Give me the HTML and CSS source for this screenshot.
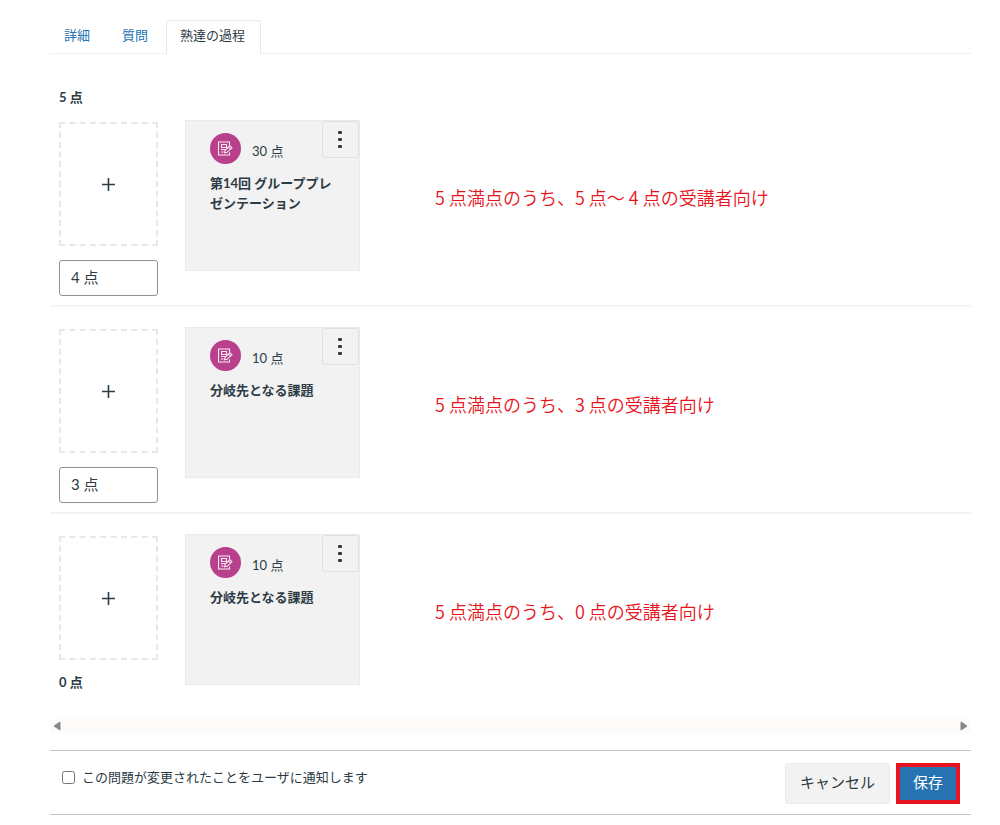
FILE: index.html
```html
<!DOCTYPE html>
<html lang="ja">
<head>
  <meta charset="UTF-8" />
  <title>熟達の過程</title>
  <meta name="viewport" content="width=device-width, initial-scale=1" />
  <link rel="stylesheet" href="styles.css">
</head>
<body>
  <svg class="sprite" aria-hidden="true">
    <symbol id="icon-assignment" viewBox="0 0 15 15">
      <path d="M11.500 4.500V1H.5v13h11v-2.500M3.500 3.500h5v3h-5zM3 8.500h4M3 11h2.500" />
      <path d="M6.500 11.800l.6-2.500L11.800 4.800l2.200 2-4.900 4.500zM10.500 6.200l2 2" />
    </symbol>
    <symbol id="icon-more" viewBox="0 0 18 18">
      <rect x="7" y="1" width="4" height="3" rx="1" />
      <rect x="7" y="8" width="4" height="3" rx="1" />
      <rect x="7" y="15" width="4" height="3" rx="1" />
    </symbol>
    <symbol id="icon-plus" viewBox="0 0 13 13">
      <path d="M6.500 0v13M0 6.500h13" />
    </symbol>
  </svg>

  <main class="page">
    <nav class="tabs">
      <a class="tab" href="#details">詳細</a>
      <a class="tab" href="#questions">質問</a>
      <a class="tab active" href="#mastery" aria-current="page">熟達の過程</a>
    </nav>

    <div class="paths">
      <p class="score">5 点</p>

      <section class="range">
        <div class="bounds">
          <button class="add-item" type="button" aria-label="アイテムを追加"><svg><use href="#icon-plus" /></svg></button>
          <input class="bound" type="text" value="4 点" aria-label="下限の点数">
        </div>
        <article class="card">
          <button class="card-menu" type="button" aria-label="オプション"><svg><use href="#icon-more" /></svg></button>
          <div class="card-head">
            <span class="badge"><svg><use href="#icon-assignment" /></svg></span>
            <span class="points">30 点</span>
          </div>
          <h2 class="card-title">第14回 グループプレゼンテーション</h2>
        </article>
        <p class="note">5 点満点のうち、5 点～ 4 点の受講者向け</p>
      </section>

      <section class="range">
        <div class="bounds">
          <button class="add-item" type="button" aria-label="アイテムを追加"><svg><use href="#icon-plus" /></svg></button>
          <input class="bound" type="text" value="3 点" aria-label="下限の点数">
        </div>
        <article class="card">
          <button class="card-menu" type="button" aria-label="オプション"><svg><use href="#icon-more" /></svg></button>
          <div class="card-head">
            <span class="badge"><svg><use href="#icon-assignment" /></svg></span>
            <span class="points">10 点</span>
          </div>
          <h2 class="card-title">分岐先となる課題</h2>
        </article>
        <p class="note">5 点満点のうち、3 点の受講者向け</p>
      </section>

      <section class="range">
        <div class="bounds">
          <button class="add-item" type="button" aria-label="アイテムを追加"><svg><use href="#icon-plus" /></svg></button>
          <p class="score">0 点</p>
        </div>
        <article class="card">
          <button class="card-menu" type="button" aria-label="オプション"><svg><use href="#icon-more" /></svg></button>
          <div class="card-head">
            <span class="badge"><svg><use href="#icon-assignment" /></svg></span>
            <span class="points">10 点</span>
          </div>
          <h2 class="card-title">分岐先となる課題</h2>
        </article>
        <p class="note">5 点満点のうち、0 点の受講者向け</p>
      </section>
    </div>

    <div class="scrollbar" aria-hidden="true">
      <svg class="arrow" viewBox="0 0 8 10"><path d="M7 1v8L1 5z" /></svg>
      <svg class="arrow" viewBox="0 0 8 10"><path d="M1 1v8l6-4z" /></svg>
    </div>

    <footer class="actions">
      <label class="notify"><input type="checkbox"> この問題が変更されたことをユーザに通知します</label>
      <button class="btn" type="button">キャンセル</button>
      <button class="btn btn-save" type="submit">保存</button>
    </footer>
  </main>
</body>
</html>
```
FILE: styles.css
```css
* {
  box-sizing: border-box;
}
body {
  margin: 0;
  background: #fff;
  color: #2d3b45;
  font-family: Lato, "Noto Sans CJK JP", sans-serif;
  font-size: 13px;
  line-height: 20px;
}
p, h2 {
  margin: 0;
}
button, input {
  font-family: inherit;
  color: inherit;
}
button {
  cursor: pointer;
}
.sprite {
  position: absolute;
  width: 0;
  height: 0;
}
.page {
  padding: 20px 29px 10px 50px;
}

/* tabs */
.tabs {
  display: flex;
  border-bottom: 1px solid #f0f0f0;
}
.tab {
  height: 33px;
  margin-bottom: -1px;
  padding: 4px 13px;
  border: 1px solid transparent;
  border-bottom: 0;
  border-radius: 3px 3px 0 0;
  color: #2573b0;
  text-decoration: none;
}
.tab + .tab {
  margin-left: 4px;
}
.tab.active {
  height: 34px;
  padding-right: 15px;
  background: #fff;
  border-color: #e8e8e8;
  color: #2d3b45;
}

/* score ranges */
.paths {
  padding-top: 33px;
}
.score {
  font-weight: 700;
}
.paths > .score {
  padding: 0 9px 13px;
}
.range {
  display: flex;
  align-items: flex-start;
  padding: 20px 9px 9px;
  border-bottom: 2px solid #f4f4f4;
}
.score + .range {
  padding-top: 0;
}
.range:last-child {
  padding-bottom: 27px;
  border-bottom: 0;
}
.bounds {
  width: 99px;
  margin-right: 27px;
  padding-top: 2px;
}
.add-item {
  display: flex;
  align-items: center;
  justify-content: center;
  width: 100%;
  height: 124px;
  margin-bottom: 14px;
  padding: 0;
  background: none;
  border: 2px dashed #e8e8e8;
}
.bounds .score {
  margin-top: -2px;
}
.add-item svg {
  width: 13px;
  height: 13px;
  fill: none;
  stroke: #2d3b45;
  stroke-width: 1.6;
}
.bound {
  display: block;
  width: 100%;
  height: 36px;
  padding: 0 11px 4px;
  background: #fff;
  border: 1px solid #8b949b;
  border-radius: 3px;
  font-size: 15px;
}
.card {
  position: relative;
  flex: none;
  width: 175px;
  min-height: 151px;
  padding: 12px 24px;
  background: #f2f2f2;
  border: 1px solid #e8eaeb;
}
.card-head {
  display: flex;
  align-items: center;
  gap: 11px;
  margin-bottom: 9px;
}
.badge {
  display: flex;
  align-items: center;
  justify-content: center;
  width: 31px;
  height: 31px;
  border-radius: 50%;
  background: #b8408c;
}
.badge svg {
  width: 15px;
  height: 15px;
  fill: none;
  stroke: #fbeaf4;
  stroke-width: 1.1;
}
.points {
  padding-top: 5px;
}
.card-title {
  font-size: 13px;
  font-weight: 700;
}
.card-menu {
  position: absolute;
  top: 0;
  right: 0;
  display: flex;
  align-items: center;
  justify-content: center;
  width: 37px;
  height: 37px;
  padding: 0 1px 1px 0;
  background: #f2f2f2;
  border: 1px solid #dde1e3;
  border-radius: 3px;
}
.card-menu svg {
  width: 18px;
  height: 18px;
  fill: #2d3b45;
}
.note {
  padding: 67px 0 0 75px;
  color: #e71420;
  font-family: "Noto Sans CJK JP", sans-serif;
  font-size: 18px;
  font-weight: 350;
}

.scrollbar {
  display: flex;
  align-items: center;
  justify-content: space-between;
  height: 14px;
  padding: 0 3px;
  background: #fcfbf9;
}
.arrow {
  width: 8px;
  height: 10px;
  fill: #868686;
  stroke: #868686;
  stroke-linejoin: round;
}

/* footer */
.actions {
  display: flex;
  align-items: flex-start;
  margin-top: 17px;
  padding: 12px 11px 10px 12px;
  border: solid #c2c4c8;
  border-width: 1px 0;
}
.notify {
  display: flex;
  align-items: center;
  gap: 7px;
  margin-right: auto;
  padding-top: 4px;
}
.notify input {
  width: 13px;
  height: 13px;
  margin: 0;
}
.btn {
  height: 41px;
  padding: 0 14px 5px;
  background: #f2f2f2;
  border: 1px solid #e8eaeb;
  border-radius: 3px;
  font-size: 15px;
}
.btn-save {
  margin-left: 6px;
  padding: 0 13px 4px;
  background: #2573b0;
  border: 4px solid #e71420;
  border-radius: 0;
  color: #fff;
}
```
